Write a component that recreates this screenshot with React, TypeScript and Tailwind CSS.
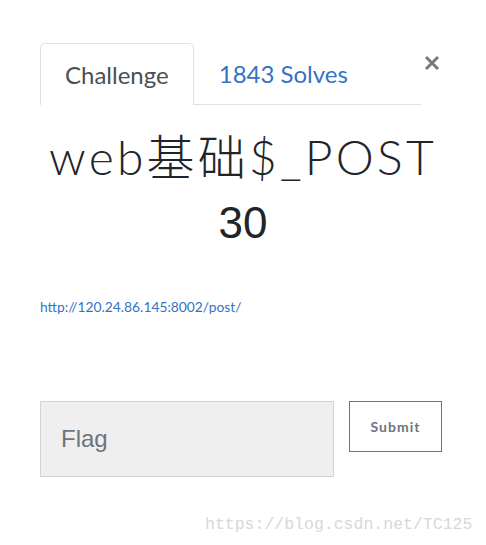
export default function App() {
  return (
    <div className="relative w-[486px] h-[545px] bg-white overflow-hidden">
      <div className="pl-10 pt-[43px] flex items-start">
        <div className="w-[381px] h-[62px] flex border-b border-[#dee2e6]">
          <div className="h-[62px] px-6 flex items-center border border-b-0 border-[#dee2e6] rounded-t-[5px] bg-white text-[24px] text-[#495057] font-['Lato',sans-serif]">
            Challenge
          </div>
          <div className="h-[61px] px-[25px] flex items-center text-[24px] text-[#3473c4] font-['Lato',sans-serif]">
            1843 Solves
          </div>
        </div>
        <div className="ml-[3px] mt-[12px] w-[16px] h-[16px] flex items-center justify-center">
          <svg width="16" height="16" viewBox="0 0 16 16">
            <path d="M2 2 L14 14 M14 2 L2 14" stroke="#7a7a7a" strokeWidth="3" strokeLinecap="butt" />
          </svg>
        </div>
      </div>
      <div className="mt-[20px] text-center text-[48px] leading-[64px] font-light text-[#212529] tracking-[3.2px] font-['Lato','Noto_Sans_CJK_SC',sans-serif]">
        web基础$_POST
      </div>
      <div className="mt-[9px] text-center text-[44px] leading-[50px] text-[#212529] font-['Liberation_Sans',sans-serif]">
        30
      </div>
      <div className="mt-[50px] pl-10 text-[13.8px] leading-[18px] text-[#3473c4] font-['Lato',sans-serif]">
        http://120.24.86.145:8002/post/
      </div>
      <div className="mt-[85px] pl-10 flex items-start gap-[15px]">
        <div className="w-[294px] h-[76px] bg-[#efefef] border border-[#ced4da] flex items-center pl-5 text-[24px] text-[#6c757d] font-['Liberation_Sans',sans-serif]">
          Flag
        </div>
        <div className="w-[93px] h-[51px] border border-[#6c757d] flex items-center justify-center text-[14px] font-bold tracking-[1px] text-[#6c757d] font-['Lato',sans-serif]">
          Submit
        </div>
      </div>
      <div className="absolute left-[205px] top-[514px] text-[16.5px] leading-[22px] text-[#d8d8d8] font-['Liberation_Mono',monospace]">
        https://blog.csdn.net/TC125
      </div>
    </div>
  );
}
